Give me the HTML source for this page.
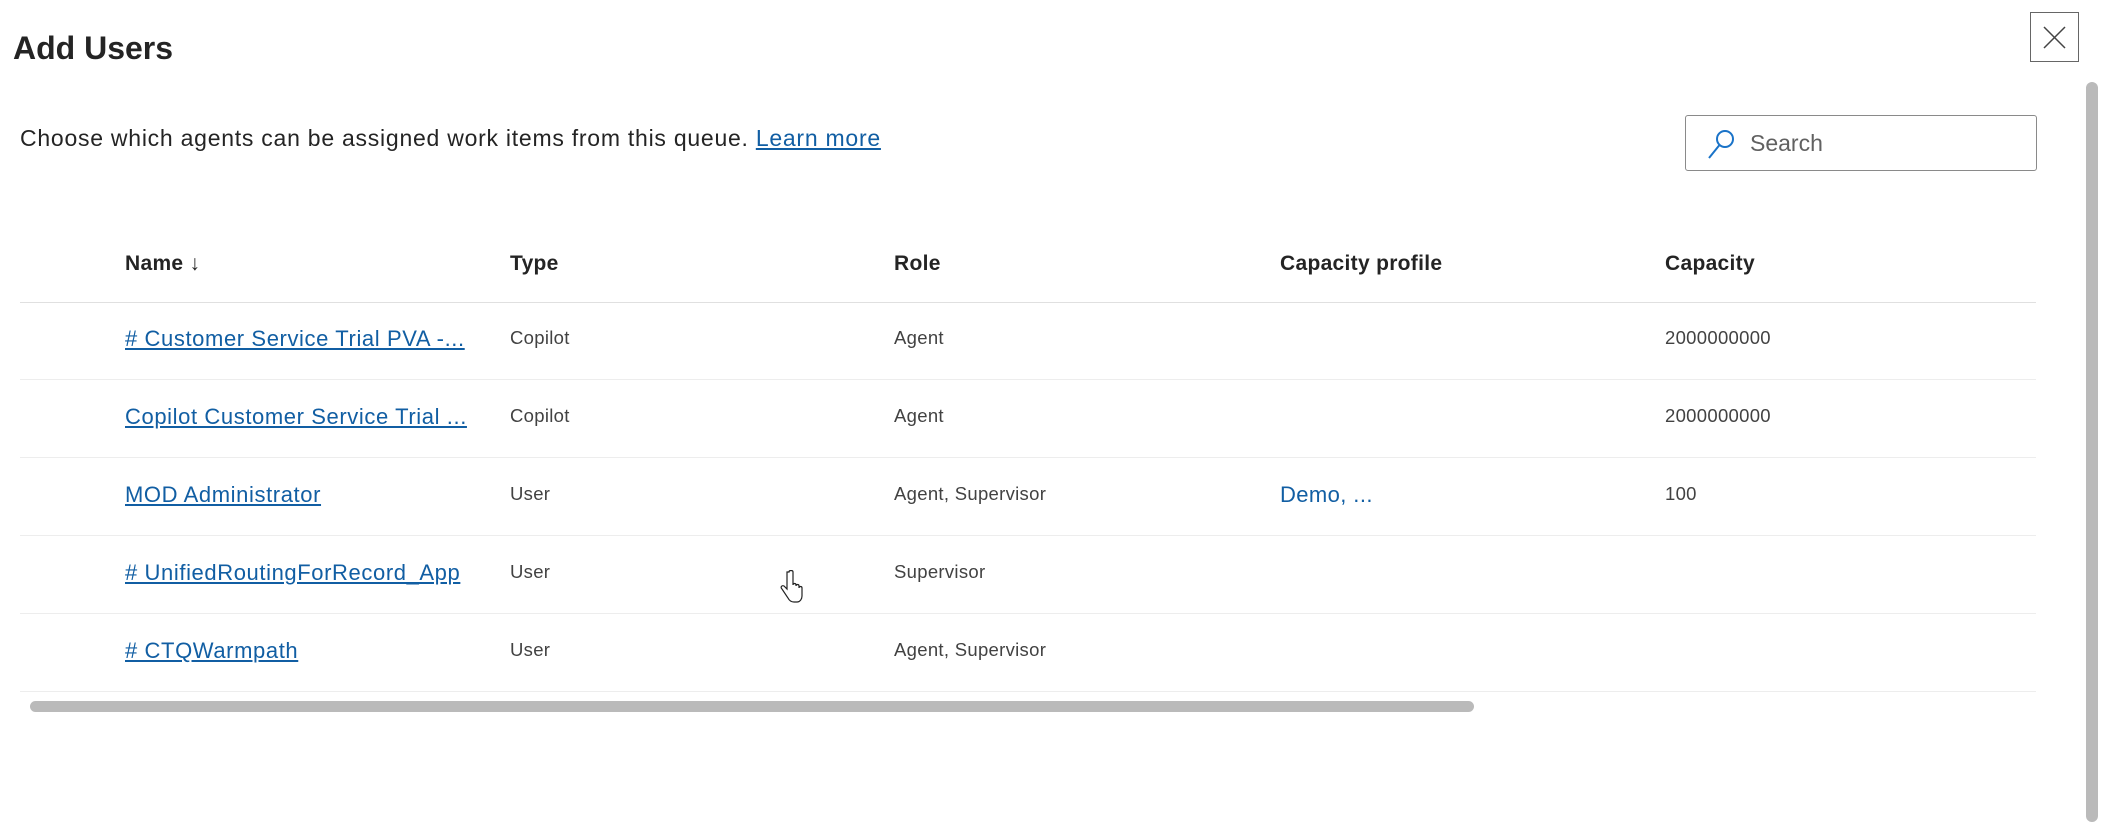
<!DOCTYPE html>
<html><head><meta charset="utf-8"><style>
*{margin:0;padding:0;box-sizing:border-box}
body{width:2109px;height:797px;background:#fff;position:relative;overflow:hidden;font-family:"Liberation Sans",sans-serif;color:#242424}
.a{position:absolute;white-space:nowrap}
h1{position:absolute;left:13px;top:30px;font-size:32px;font-weight:bold;letter-spacing:0px}
.desc{left:20px;top:125px;font-size:23px;letter-spacing:0.75px;color:#242424}
.desc a{color:#115ea3;text-decoration:underline}
.hd{font-size:21px;font-weight:bold;top:252px;letter-spacing:0.3px}
.ln{position:absolute;left:20px;width:2016px;height:1px;background:#ededed}
.nm{font-size:22px;letter-spacing:0.6px;color:#115ea3;text-decoration:underline}
.c{font-size:18.5px;letter-spacing:0.3px;color:#424242}
</style></head><body>
<h1>Add Users</h1>
<div class="a desc">Choose which agents can be assigned work items from this queue. <a>Learn more</a></div>
<div class="a" style="left:2030px;top:12px;width:49px;height:50px;border:1px solid #666"></div>
<svg class="a" style="left:2042px;top:25px" width="25" height="25"><path d="M2 2L23 23M23 2L2 23" stroke="#444" stroke-width="1.5"/></svg>
<div class="a" style="left:1685px;top:115px;width:352px;height:56px;border:1px solid #8a8a8a;border-radius:3px"></div>
<svg class="a" style="left:1706px;top:128px" width="30" height="32"><circle cx="19" cy="11" r="8" fill="none" stroke="#1a73c8" stroke-width="2"/><path d="M13.5 17L3 30" stroke="#1a73c8" stroke-width="2"/></svg>
<div class="a" style="left:1750px;top:130px;font-size:23px;color:#616161">Search</div>
<div class="a hd" style="left:125px">Name ↓</div>
<div class="a hd" style="left:510px">Type</div>
<div class="a hd" style="left:894px">Role</div>
<div class="a hd" style="left:1280px">Capacity profile</div>
<div class="a hd" style="left:1665px">Capacity</div>
<div class="ln" style="top:302px;background:#e0e0e0"></div>
<div class="ln" style="top:379px"></div>
<div class="ln" style="top:457px"></div>
<div class="ln" style="top:535px"></div>
<div class="ln" style="top:613px"></div>
<div class="ln" style="top:691px"></div>

<div class="a nm" style="left:125px;top:326px"># Customer Service Trial PVA -...</div>
<div class="a c" style="left:510px;top:327px">Copilot</div>
<div class="a c" style="left:894px;top:327px">Agent</div>
<div class="a c" style="left:1665px;top:327px">2000000000</div>

<div class="a nm" style="left:125px;top:404px">Copilot Customer Service Trial ...</div>
<div class="a c" style="left:510px;top:405px">Copilot</div>
<div class="a c" style="left:894px;top:405px">Agent</div>
<div class="a c" style="left:1665px;top:405px">2000000000</div>

<div class="a nm" style="left:125px;top:482px">MOD Administrator</div>
<div class="a c" style="left:510px;top:483px">User</div>
<div class="a c" style="left:894px;top:483px">Agent, Supervisor</div>
<div class="a" style="left:1280px;top:482px;font-size:22px;letter-spacing:0.4px;color:#115ea3">Demo, ...</div>
<div class="a c" style="left:1665px;top:483px">100</div>

<div class="a nm" style="left:125px;top:560px"># UnifiedRoutingForRecord_App</div>
<div class="a c" style="left:510px;top:561px">User</div>
<div class="a c" style="left:894px;top:561px">Supervisor</div>

<div class="a nm" style="left:125px;top:638px"># CTQWarmpath</div>
<div class="a c" style="left:510px;top:639px">User</div>
<div class="a c" style="left:894px;top:639px">Agent, Supervisor</div>

<svg class="a" style="left:779px;top:570px" width="24" height="34"><path d="M8 2v17l-3-3c-2-1-4 1-2 3l6 9c1 2 3 4 6 4h3c3 0 5-3 5-6v-8c0-2-3-2-3 0v-2c0-2-3-2-3 0v-1c0-2-3-2-3 0V2c0-2-4-2-4 0z" fill="#fff" stroke="#222" stroke-width="1.2"/></svg>

<div class="a" style="left:30px;top:701px;width:1444px;height:11px;background:#bababa;border-radius:6px"></div>
<div class="a" style="left:2086px;top:82px;width:12px;height:740px;background:#bababa;border-radius:6px"></div>
</body></html>
